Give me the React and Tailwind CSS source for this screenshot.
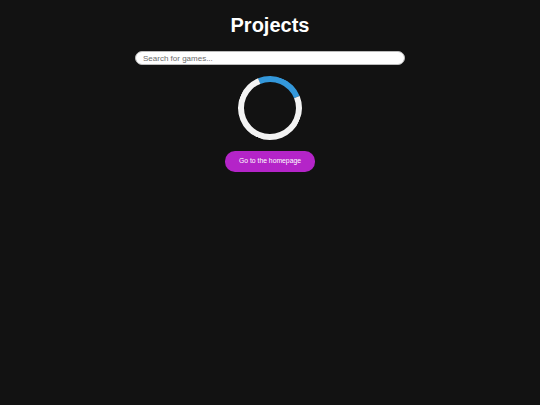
export default function App() {
  return (
    <div className="min-h-[405px] w-full bg-[#121212] flex flex-col items-center pt-[14px]" style={{ fontFamily: '"Liberation Sans", Arial, sans-serif' }}>
      <h1 className="text-[20px] leading-[23px] font-bold text-white m-0">Projects</h1>
      <input
        type="text"
        placeholder="Search for games..."
        className="mt-[14px] w-[270px] h-[14px] rounded-full bg-white border border-[#bbbbbb] px-[7px] text-[8px] leading-[12px] text-black placeholder:text-[#6b6b6b] outline-none"
      />
      <div className="mt-[11px] w-[64px] h-[64px] rounded-full border-[6px] border-[#f3f3f3] border-t-[#3498db] rotate-[23deg]" />
      <button className="mt-[11px] h-[21px] px-[14px] rounded-[10px] bg-[#b424c8] text-white text-[6.8px] leading-none">
        Go to the homepage
      </button>
    </div>
  );
}
